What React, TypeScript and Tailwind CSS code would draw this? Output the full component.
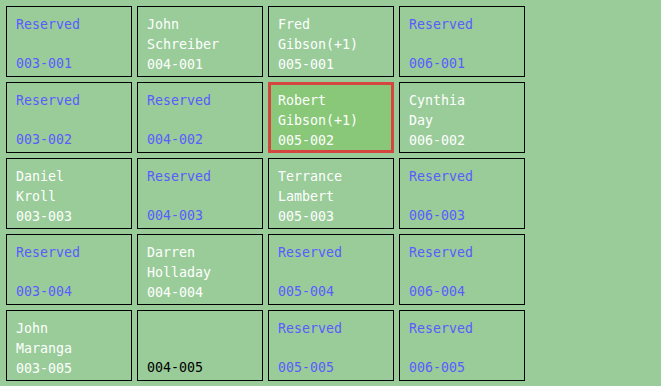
import React from 'react';

type Seat = {
  id: string;
  first?: string;
  last?: string;
  reserved?: boolean;
  selected?: boolean;
};

const seats: Seat[] = [
  { id: '003-001', reserved: true },
  { id: '004-001', first: 'John', last: 'Schreiber' },
  { id: '005-001', first: 'Fred', last: 'Gibson(+1)' },
  { id: '006-001', reserved: true },
  { id: '003-002', reserved: true },
  { id: '004-002', reserved: true },
  { id: '005-002', first: 'Robert', last: 'Gibson(+1)', selected: true },
  { id: '006-002', first: 'Cynthia', last: 'Day' },
  { id: '003-003', first: 'Daniel', last: 'Kroll' },
  { id: '004-003', reserved: true },
  { id: '005-003', first: 'Terrance', last: 'Lambert' },
  { id: '006-003', reserved: true },
  { id: '003-004', reserved: true },
  { id: '004-004', first: 'Darren', last: 'Holladay' },
  { id: '005-004', reserved: true },
  { id: '006-004', reserved: true },
  { id: '003-005', first: 'John', last: 'Maranga' },
  { id: '004-005' },
  { id: '005-005', reserved: true },
  { id: '006-005', reserved: true },
];

const SeatCell = ({ seat }: { seat: Seat }) => {
  const color = seat.reserved
    ? 'text-[#5b5bff]'
    : seat.first
    ? 'text-white'
    : 'text-black';

  return (
    <div
      className={
        seat.selected
          ? 'flex flex-col h-[71px] border-[3px] border-[#d4463f] bg-[#88c878] pl-[7px] pt-[6px] ' + color
          : 'flex flex-col h-[71px] border border-black pl-[9px] pt-[8px] ' + color
      }
    >
      {seat.reserved && <div>Reserved</div>}
      {seat.first && (
        <>
          <div>{seat.first}</div>
          <div>{seat.last}</div>
        </>
      )}
      <div className="mt-auto mb-[2px]">{seat.id}</div>
    </div>
  );
};

export default function App() {
  return (
    <div
      className="w-[661px] h-[386px] bg-[#99cc99] p-[6px] text-[13.3px] leading-5"
      style={{ fontFamily: '"DejaVu Sans Mono", "Liberation Mono", monospace' }}
    >
      <div className="grid grid-cols-[repeat(4,126px)] gap-[5px]">
        {seats.map((s) => (
          <SeatCell key={s.id} seat={s} />
        ))}
      </div>
    </div>
  );
}
